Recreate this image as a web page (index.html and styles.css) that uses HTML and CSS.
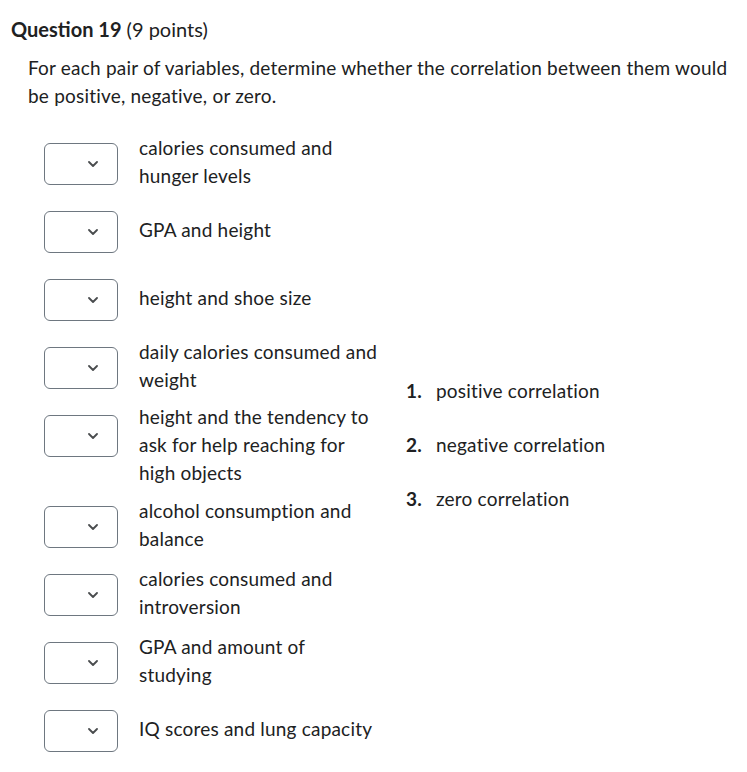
FILE: index.html
```html
<!DOCTYPE html>
<html>
<head>
<meta charset="utf-8">
<link rel="stylesheet" href="styles.css">
</head>
<body>
<div class="question">
  <h2 class="q-title"><span class="q-name">Question 19</span> (9 points)</h2>
  <div class="q-body">
    <p class="prompt">For each pair of variables, determine whether the correlation between them would be positive, negative, or zero.</p>
    <div class="match">
      <div class="pairs">
        <div class="row"><div class="select"><svg class="chev" width="10" height="6" viewBox="0 0 10 6"><path d="M1 1 L5 5 L9 1" fill="none" stroke="#494c4e" stroke-width="1.8" stroke-linecap="round" stroke-linejoin="round"/></svg></div><div class="label">calories consumed and hunger levels</div></div>
        <div class="row"><div class="select"><svg class="chev" width="10" height="6" viewBox="0 0 10 6"><path d="M1 1 L5 5 L9 1" fill="none" stroke="#494c4e" stroke-width="1.8" stroke-linecap="round" stroke-linejoin="round"/></svg></div><div class="label">GPA and height</div></div>
        <div class="row"><div class="select"><svg class="chev" width="10" height="6" viewBox="0 0 10 6"><path d="M1 1 L5 5 L9 1" fill="none" stroke="#494c4e" stroke-width="1.8" stroke-linecap="round" stroke-linejoin="round"/></svg></div><div class="label">height and shoe size</div></div>
        <div class="row"><div class="select"><svg class="chev" width="10" height="6" viewBox="0 0 10 6"><path d="M1 1 L5 5 L9 1" fill="none" stroke="#494c4e" stroke-width="1.8" stroke-linecap="round" stroke-linejoin="round"/></svg></div><div class="label">daily calories consumed and weight</div></div>
        <div class="row"><div class="select"><svg class="chev" width="10" height="6" viewBox="0 0 10 6"><path d="M1 1 L5 5 L9 1" fill="none" stroke="#494c4e" stroke-width="1.8" stroke-linecap="round" stroke-linejoin="round"/></svg></div><div class="label">height and the tendency to ask for help reaching for high objects</div></div>
        <div class="row"><div class="select"><svg class="chev" width="10" height="6" viewBox="0 0 10 6"><path d="M1 1 L5 5 L9 1" fill="none" stroke="#494c4e" stroke-width="1.8" stroke-linecap="round" stroke-linejoin="round"/></svg></div><div class="label">alcohol consumption and balance</div></div>
        <div class="row"><div class="select"><svg class="chev" width="10" height="6" viewBox="0 0 10 6"><path d="M1 1 L5 5 L9 1" fill="none" stroke="#494c4e" stroke-width="1.8" stroke-linecap="round" stroke-linejoin="round"/></svg></div><div class="label">calories consumed and introversion</div></div>
        <div class="row"><div class="select"><svg class="chev" width="10" height="6" viewBox="0 0 10 6"><path d="M1 1 L5 5 L9 1" fill="none" stroke="#494c4e" stroke-width="1.8" stroke-linecap="round" stroke-linejoin="round"/></svg></div><div class="label">GPA and amount of studying</div></div>
        <div class="row"><div class="select"><svg class="chev" width="10" height="6" viewBox="0 0 10 6"><path d="M1 1 L5 5 L9 1" fill="none" stroke="#494c4e" stroke-width="1.8" stroke-linecap="round" stroke-linejoin="round"/></svg></div><div class="label">IQ scores and lung capacity</div></div>
      </div>
      <ol class="choices">
        <li><span class="num">1.</span><span>positive correlation</span></li>
        <li><span class="num">2.</span><span>negative correlation</span></li>
        <li><span class="num">3.</span><span>zero correlation</span></li>
      </ol>
    </div>
  </div>
</div>
</body>
</html>
```

FILE: styles.css
```css
html, body {
  margin: 0;
  padding: 0;
  background: #ffffff;
}

body {
  font-family: Lato, "Noto Sans", sans-serif;
  color: #202122;
  font-size: 19px;
  letter-spacing: 0.2px;
  line-height: 28px;
}

.question {
  padding-left: 11px;
  padding-top: 15px;
}

.q-title {
  margin: 0;
  font-size: 20px;
  line-height: 28px;
  font-weight: 400;
  letter-spacing: 0;
}

.q-name {
  font-weight: 700;
}

.q-body {
  padding-left: 17px;
}

.prompt {
  margin: 11px 0 0 0;
}

.match {
  display: flex;
  align-items: center;
  margin-top: 21px;
  padding-left: 16px;
}

.pairs {
  display: flex;
  flex-direction: column;
  gap: 7px;
}

.row {
  display: flex;
  min-height: 61px;
}

.select {
  box-sizing: border-box;
  width: 74px;
  height: 42px;
  margin-top: 12px;
  border: 1px solid #6e7780;
  border-radius: 6px;
  display: flex;
  align-items: center;
  padding-left: 43px;
  flex-shrink: 0;
}

.chev {
  display: block;
}

.label {
  align-self: center;
  width: 241px;
  margin-left: 21px;
}

.choices {
  list-style: none;
  margin: 0 0 0 26px;
  padding: 0;
  display: flex;
  flex-direction: column;
  gap: 26px;
}

.choices li {
  display: flex;
}

.num {
  width: 30px;
  font-weight: 700;
  color: #202122;
}
```
